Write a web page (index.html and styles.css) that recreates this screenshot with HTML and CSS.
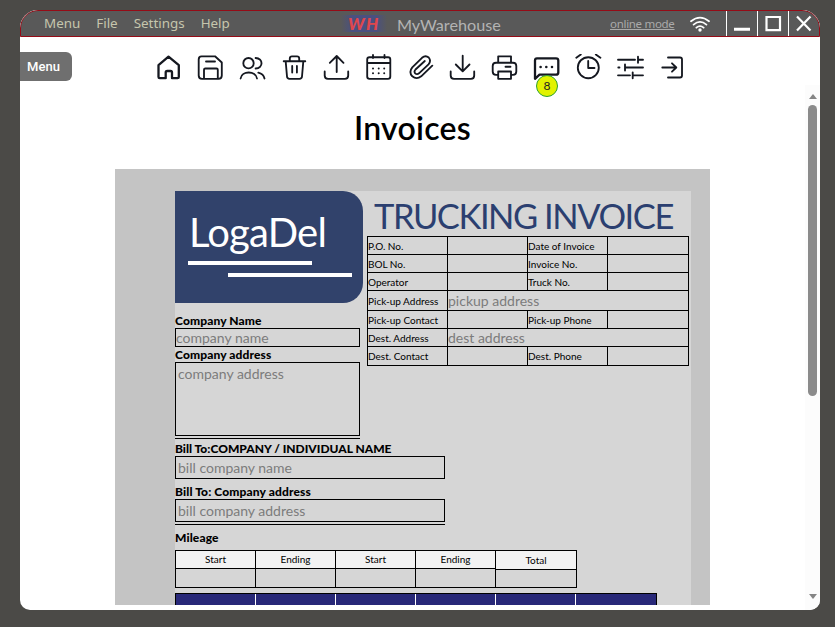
FILE: index.html
```html
<!DOCTYPE html>
<html lang="en">
<head>
<meta charset="utf-8">
<title>MyWarehouse</title>
<link rel="stylesheet" href="styles.css">
</head>
<body>
<div class="window">
  <header class="titlebar">
    <nav class="menus"><span>Menu</span><span>File</span><span>Settings</span><span>Help</span></nav>
    <div class="brand"><span class="brand-mark">WH</span><span class="brand-name">MyWarehouse</span></div>
    <div class="status">
      <span class="online">online mode</span>
      <svg class="wifi" width="20" height="16" viewBox="0 0 20 16"><path d="M1 5.2Q10-2 19 5.2M3.6 8.6Q10 3.2 16.4 8.6M6.4 11.7Q10 8.5 13.6 11.7"/><circle cx="10" cy="14" r="1.7"/></svg>
    </div>
    <div class="controls">
      <span><svg width="30" height="25" viewBox="0 0 30 25"><path d="M7 18.3H23"/></svg></span>
      <span><svg width="30" height="25" viewBox="0 0 30 25"><path class="thin" d="M8.5 6H22V19.2H8.5Z"/></svg></span>
      <span><svg width="30" height="25" viewBox="0 0 30 25"><path class="thin" d="M8 5.5 21.5 19.5M21.5 5.5 8 19.5"/></svg></span>
    </div>
  </header>
  <div class="toolbar">
    <button class="menu-tab">Menu</button>
    <div class="icons">
      <svg viewBox="0 0 28 28" class="heavy"><path d="M4.5 11.2 14.5 2.6 24.8 11.2V23q0 1.2-1.2 1.2H18V18.5q0-1.5-1.5-1.5h-3.3q-1.5 0-1.5 1.5v5.7H5.7Q4.5 24.2 4.5 23Z"/></svg>
      <svg viewBox="0 0 28 28"><path d="M5.5 2.3H19L25.8 8.5V21.5q0 3.3-3.3 3.3H6Q2.7 24.8 2.7 21.5V5.5Q2.7 2.3 5.5 2.3ZM8 24.5V15.8q0-1.3 1.3-1.3H20.5q1.3 0 1.3 1.3V24.5M10 7.500H19"/></svg>
      <svg viewBox="0 0 28 28"><circle cx="10.5" cy="9.2" r="5.2"/><path d="M2.6 24.5C3.5 16.5 18 16.5 19 24.5M17.6 4C25.5 4.5 25.5 14 17.6 14.5M20.3 18.7Q25.5 20 26.5 24.5"/></svg>
      <svg viewBox="0 0 28 28"><path d="M3.7 7.2H25.3M9.8 7V4.5Q9.800 2.3 12 2.3H17Q19.2 2.3 19.2 4.5V7M5.700 7.500 7 22.500Q7.200 24.800 9.500 24.800H19.500Q21.800 24.800 22 22.500L23.300 7.500M12.200 12V18.500M16.900 12V18.500"/></svg>
      <svg viewBox="0 0 28 28"><path d="M14.700 18V2.300M7.800 8.800 14.700 2 21.500 8.800M2.700 17.500V21.500Q2.700 24.800 6 24.800H23Q26.200 24.800 26.200 21.500V17.500"/></svg>
      <svg viewBox="0 0 28 28"><path d="M5.500 3.200H24Q26.300 3.200 26.300 5.500V22.500Q26.300 24.800 24 24.800H5.500Q3.200 24.800 3.200 22.500V5.500Q3.200 3.200 5.500 3.200ZM3.200 9H26.300M9 1V4M20.500 1V4"/><path class="dots" d="M9 14.500h.01M14.700 14.500h.01M20.200 14.500h.01M9 19.300h.01M14.700 19.300h.01M20.200 19.300h.01"/></svg>
      <svg viewBox="0 0 28 28"><path d="M26.300 11.700 15.200 22.300Q10.500 26 6.300 22.300 2.500 18 6.300 13.300L16 3.800Q19.500.800 22.700 3.500 25.500 6.800 22.500 10.300L13 19.300Q11 21 9.200 19.300 7.700 17.500 9.500 15.500L18.800 7"/></svg>
      <svg viewBox="0 0 28 28"><path d="M14.700 1.700V17M7.800 10.500 14.700 17.300 21.500 10.500M2.700 17.500V21.500Q2.700 24.800 6 24.800H23Q26.200 24.800 26.200 21.500V17.500"/></svg>
      <svg viewBox="0 0 28 28"><path d="M8.200 8.500V2.300H21V8.500M7.500 20.800H6Q2.700 20.800 2.700 17.500V12Q2.700 8.700 6 8.700H23Q26.300 8.700 26.300 12V17.500Q26.300 20.800 23 20.800H21.500M8.200 17.500H21V24.800H8.200ZM15.500 12.700H20.500"/></svg>
      <span class="chat">
        <svg viewBox="0 0 28 28" class="heavy"><path d="M5 4.300H24Q26.300 4.300 26.300 6.500V18.500Q26.300 20.700 24 20.700H7.500L3 24.800V6.500Q3 4.300 5 4.300Z"/><path class="dots big" d="M8.600 13h.01M14.300 13h.01M20 13h.01"/></svg>
        <span class="badge">8</span>
      </span>
      <svg viewBox="0 0 28 28"><circle cx="14.300" cy="13.700" r="10.500"/><path d="M14.200 7V14H20.500M2.300 3.800 6.800.500M21.800.500 26.400 3.800"/></svg>
      <svg viewBox="0 0 28 28"><path d="M2 5.700H19M22 2.700V8.700M22 5.700H27M2.300 13.500H3.500M9 10.500V16.500M9 13.500H27M2 21.300H14M16.700 18.300V24.300M16.700 21.300H27"/></svg>
      <svg viewBox="0 0 28 28"><path d="M10 3.500H22Q24 3.500 24 5.500V21.500Q24 23.500 22 23.500H10M4.300 13.500H18M14 9.300 18.300 13.500 14 17.700"/></svg>
    </div>
  </div>
  <main class="content">
    <div class="page">
      <h1>Invoices</h1>
      <div class="desk">
        <div class="sheet">
          <div class="top">
            <section class="company">
              <div class="logo"><span class="logo-text">LogaDel</span><i class="bar"></i><i class="bar shifted"></i></div>
              <label class="first">Company Name</label>
              <div class="field tight">company name</div>
              <label>Company address</label>
              <div class="field area">company address</div>
              <hr>
            </section>
            <section class="invoice">
              <h2>TRUCKING INVOICE</h2>
              <div class="grid">
                <b>P.O. No.</b><b></b><b>Date of Invoice</b><b></b>
                <b>BOL No.</b><b></b><b>Invoice No.</b><b></b>
                <b>Operator</b><b></b><b>Truck No.</b><b></b>
                <b>Pick-up Address</b><b class="wide">pickup address</b>
                <b>Pick-up Contact</b><b></b><b>Pick-up Phone</b><b></b>
                <b>Dest. Address</b><b class="wide">dest address</b>
                <b>Dest. Contact</b><b></b><b>Dest. Phone</b><b></b>
              </div>
            </section>
          </div>
          <section class="bill">
            <label class="caps">Bill To:COMPANY / INDIVIDUAL NAME</label>
            <div class="field">bill company name</div>
            <label class="second">Bill To: Company address</label>
            <div class="field">bill company address</div>
            <hr>
          </section>
          <label class="mileage-label">Mileage</label>
          <div class="mileage">
            <div><b>Start</b></div><div><b>Ending</b></div><div><b>Start</b></div><div><b>Ending</b></div><div class="total"><b>Total</b></div>
          </div>
          <div class="items"><i></i><i></i><i></i><i></i><i></i><i></i></div>
        </div>
      </div>
    </div>
    <div class="scrollbar"><i class="up"></i><i class="thumb"></i><i class="down"></i></div>
  </main>
</div>
</body>
</html>
```
FILE: styles.css
```css
* { box-sizing: border-box; }
body { margin: 0; height: 627px; padding: 10px 15px 17px 20px; background: #4b4a47; font-family: Lato, "Liberation Sans", sans-serif; overflow: hidden; }
.window { width: 800px; height: 600px; display: flex; flex-direction: column; background: #fff; border-radius: 18px 18px 10px 10px; overflow: hidden; }
.titlebar { flex: none; height: 27px; display: flex; background: #595959; border: 1px solid #960b16; border-radius: 18px 18px 0 0; overflow: hidden; color: #c6c6ad; }
.menus { width: 320px; padding-left: 23px; display: flex; gap: 16px; font: 13.4px/25px "Noto Sans", sans-serif; }
.brand { width: 262px; display: flex; align-items: center; color: #b3b3b3; }
.brand-mark { width: 46px; height: 17px; padding-left: 7px; font: italic 900 17px/18px Lato, sans-serif; letter-spacing: 1.5px; color: #e0474d; background: linear-gradient(90deg, #595959, #4a5080 25%, #4a5080 75%, #595959); }
.brand-name { margin-left: 10px; font-size: 16.2px; line-height: 25px; padding-top: 2px; white-space: nowrap; }
.status { width: 123px; display: flex; padding-left: 7px; }
.online { width: 80px; font: 11.5px/26px "Noto Sans", sans-serif; letter-spacing: -0.3px; text-decoration: underline; color: #aaa; white-space: nowrap; }
.wifi { margin-top: 5px; fill: #fff; }
.wifi path { fill: none; stroke: #fff; stroke-width: 1.8; stroke-linecap: round; }
.controls { display: flex; }
.controls span { width: 31px; border-left: 1px solid #fff; }
.controls svg { display: block; }
.controls path { fill: none; stroke: #fff; stroke-width: 3; }
.controls .thin { stroke-width: 2.2; }
.toolbar { flex: none; height: 48px; padding-top: 15px; display: flex; align-items: flex-start; }
.menu-tab { width: 52px; height: 29px; padding: 0 5px 0 0; border: 0; border-radius: 0 6px 6px 0; background: #6f6f6f; color: #fff; font: 500 13px/29px Roboto, sans-serif; }
.icons { margin: 2px 0 0 82px; display: flex; gap: 14px; }
.icons svg { display: block; width: 28px; height: 28px; fill: none; stroke: #151820; stroke-width: 1.85; stroke-linejoin: round; stroke-linecap: round; }
.icons .heavy { stroke-width: 2.3; }
.icons .dots { stroke-width: 2; }
.icons .big { stroke-width: 2.6; }
.chat { position: relative; }
.badge { position: absolute; left: 4px; top: 21px; width: 22px; height: 22px; border: 1px solid #2da32d; border-radius: 50%; background: #e2f200; font-size: 12px; line-height: 20px; text-align: center; color: #222; }
.content { flex: 1; min-height: 0; display: flex; }
.page { width: 785px; padding: 0 0 5px 95px; display: flex; flex-direction: column; }
h1 { flex: none; width: 595px; height: 84px; margin: 0; padding-top: 24px; text-align: center; font-size: 32px; font-weight: 600; line-height: 38px; letter-spacing: 0.25px; color: #000; }
.desk { flex: 1; min-height: 0; width: 595px; padding: 22px 19px 0 60px; background: #c4c4c4; overflow: hidden; }
.sheet { width: 516px; height: 430px; background: #d6d6d6; }
.top { display: flex; gap: 7px; height: 250px; }
.company { width: 185px; }
.logo { width: 188px; height: 112px; padding: 18px 0 0 13px; background: #31426b; border-radius: 0 20px 20px 0; color: #fff; }
.logo-text { display: block; height: 52px; font-size: 40px; line-height: 47px; letter-spacing: -0.8px; padding-left: 1px; }
.bar { display: block; width: 124px; height: 4px; background: #fff; }
.shifted { margin: 8px 0 0 40px; }
label { display: block; height: 15px; font-size: 12px; font-weight: 900; line-height: 15px; letter-spacing: 0.12px; white-space: nowrap; color: #000; }
.caps { letter-spacing: 0; }
.first { margin-top: 10px; }
.field { height: 23px; padding-left: 2px; border: 1px solid #000; font-size: 14px; line-height: 22px; color: #7c7c7c; }
.tight { height: 19px; padding-left: 0; line-height: 18px; }
.area { height: 74px; }
hr { height: 1px; margin: 2px 0 0; border: 0; background: #000; }
.invoice { width: 322px; }
h2 { height: 45px; margin: 0; padding: 4px 0 0 7px; font-size: 34.5px; font-weight: 400; line-height: 41px; letter-spacing: -1.45px; color: #2b3f70; white-space: nowrap; }
.grid { display: grid; grid-template-columns: 80px 80px 80px 81px; grid-template-rows: 18px 18px 18px 20px 18px 18px 19px; border: solid #000; border-width: 0 1px 1px 0; }
.grid b { border: solid #000; border-width: 1px 0 0 1px; font-size: 10px; font-weight: 400; display: flex; align-items: center; line-height: 12px; white-space: nowrap; }
.grid .wide { grid-column: span 3; font-size: 14px; color: #7c7c7c; }
.bill { width: 270px; }
.second { margin-top: 5px; }
.mileage-label { margin-top: 5px; }
.mileage { width: 402px; height: 38px; margin-top: 5px; display: flex; border: solid #000; border-width: 1px 1px 1px 0; }
.mileage div { width: 80px; border-left: 1px solid #000; }
.mileage .total { width: 81px; }
.mileage b { display: block; height: 18px; border-bottom: 1px solid #000; background: #f2f2f2; font-size: 10px; line-height: 17px; font-weight: 400; text-align: center; }
.mileage .total b { height: 19px; line-height: 19px; }
.items { width: 482px; height: 30px; margin-top: 5px; display: flex; border: 1px solid #000; background: #282878; }
.items i { width: 80px; border-right: 1px solid #fff; }
.items i:last-child { border: 0; }
.scrollbar { width: 15px; padding-top: 9px; display: flex; flex-direction: column; align-items: center; background: #fcfcfc; }
.up, .down { border: solid transparent; border-width: 0 4px; }
.up { border-bottom: 5px solid #858585; }
.down { margin-top: 198px; border-top: 5px solid #858585; }
.thumb { width: 9px; height: 291px; margin-top: 6px; border-radius: 5px; background: #8b8b8b; }
```
